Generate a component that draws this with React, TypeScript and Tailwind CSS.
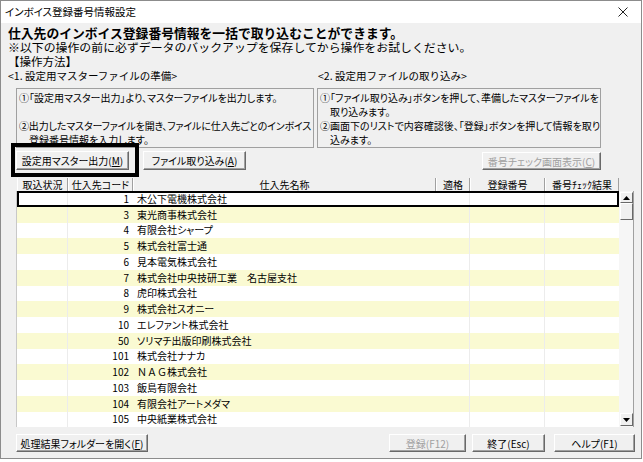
import React from 'react';

const rows: { code: number; name: React.ReactNode }[] = [
  { code: 1, name: '木公下電機株式会社' },
  { code: 3, name: '東光商事株式会社' },
  { code: 4, name: '有限会社シャープ' },
  { code: 5, name: '株式会社富士通' },
  { code: 6, name: '見本電気株式会社' },
  { code: 7, name: '株式会社中央技研工業　名古屋支社' },
  { code: 8, name: '虎印株式会社' },
  { code: 9, name: '株式会社スオニー' },
  { code: 10, name: 'エレファント株式会社' },
  { code: 50, name: 'ソリマチ出版印刷株式会社' },
  { code: 101, name: '株式会社ナナカ' },
  {
    code: 102,
    name: (
      <>
        <span className="[font-feature-settings:normal]">ＮＡＧ</span>株式会社
      </>
    ),
  },
  { code: 103, name: '飯島有限会社' },
  { code: 104, name: '有限会社アートメダマ' },
  { code: 105, name: '中央紙業株式会社' },
];

const WinButton: React.FC<{ className: string; disabled?: boolean; children: React.ReactNode }> = ({
  className,
  disabled,
  children,
}) => (
  <div
    className={`${className} flex items-center justify-center whitespace-nowrap bg-[#f0f0f0] border border-t-white border-l-white border-r-[#696969] border-b-[#696969] shadow-[inset_-1px_-1px_0_#a0a0a0] text-[10px] ${
      disabled ? 'text-[#a0a0a0]' : 'text-black'
    }`}
  >
    {children}
  </div>
);

const HeaderCell: React.FC<{ children?: React.ReactNode }> = ({ children }) => (
  <div className="flex items-center justify-center whitespace-nowrap border-l border-l-white border-r border-r-[#a0a0a0] text-[10px] leading-none">
    {children}
  </div>
);

const Triangle: React.FC<{ up?: boolean }> = ({ up }) => (
  <svg width="7" height="4" viewBox="0 0 7 4">
    {up ? <polygon points="0,4 7,4 3.5,0" fill="#000" /> : <polygon points="0,0 7,0 3.5,4" fill="#000" />}
  </svg>
);

export default function App() {
  return (
    <div className="relative w-[643px] h-[462px] bg-white overflow-hidden text-black font-['Noto_Sans_CJK_JP',sans-serif] [font-feature-settings:'palt']">
      <div className="w-[642px] h-[459px] border border-[#8c8c8c] flex flex-col">
        {/* title bar */}
        <div className="h-[22px] bg-white flex items-center justify-between pl-[4px] pr-[13px]">
          <span className="text-[10.5px]">インボイス登録番号情報設定</span>
          <svg width="10" height="10" viewBox="0 0 10 10">
            <path d="M0.5 0.5 L9.5 9.5 M9.5 0.5 L0.5 9.5" stroke="#222" strokeWidth="1" />
          </svg>
        </div>

        {/* body */}
        <div className="flex-1 bg-[#f0f0f0] flex flex-col pt-[3px]">
          <div className="pl-[7px] whitespace-nowrap [font-feature-settings:normal]">
            <div className="h-[14px] leading-[14px] text-[12.8px] font-bold">仕入先のインボイス登録番号情報を一括で取り込むことができます。</div>
            <div className="h-[14px] leading-[14px] text-[11.9px]">※以下の操作の前に必ずデータのバックアップを保存してから操作をお試しください。</div>
            <div className="h-[14px] leading-[14px] text-[11.5px]">【操作方法】</div>
            <div className="mt-[1px] h-[14px] leading-[14px] text-[10.5px] flex">
              <span className="w-[310px]">&lt;1. 設定用マスターファイルの準備&gt;</span>
              <span>&lt;2. 設定用ファイルの取り込み&gt;</span>
            </div>
          </div>

          {/* instruction boxes */}
          <div className="mt-[5px] flex pl-[15px] gap-[3px]">
            <div className="w-[298px] h-[60px] border border-[#a0a0a0] overflow-hidden pl-[2px] pt-[2px] leading-[14px] text-[10px] whitespace-nowrap">
              <div>①「設定用マスター出力」より、マスターファイルを出力します。</div>
              <div>&nbsp;</div>
              <div className="tracking-[-0.15px]">②出力したマスターファイルを開き、ファイルに仕入先ごとのインボイス</div>
              <div className="pl-[10px]">登録番号情報を入力します。</div>
            </div>
            <div className="w-[284px] h-[60px] border border-[#a0a0a0] overflow-hidden pl-[2px] pt-[2px] leading-[14px] text-[10px] whitespace-nowrap">
              <div>①「ファイル取り込み」ボタンを押して、準備したマスターファイルを</div>
              <div className="pl-[10px]">取り込みます。</div>
              <div>②画面下のリストで内容確認後、「登録」ボタンを押して情報を取り</div>
              <div className="pl-[10px]">込みます。</div>
            </div>
          </div>

          {/* buttons */}
          <div className="mt-[3px] flex items-start pl-[15px] pr-[40px]">
            <WinButton className="w-[113px] h-[19px]">
              設定用マスター出力(<span className="underline">M</span>)
            </WinButton>
            <WinButton className="ml-[14px] w-[103px] h-[19px]">
              ファイル取り込み(<span className="underline">A</span>)
            </WinButton>
            <div className="flex-1" />
            <WinButton className="mt-[1px] w-[119px] h-[18px]" disabled>
              番号チェック画面表示(<span className="underline">C</span>)
            </WinButton>
          </div>

          {/* grid */}
          <div className="mt-[8px] ml-[15px] w-[618px]">
            <div className="flex h-[13px] pl-[1px]">
              <div className="grid grid-cols-[51px_65px_303px_34px_75px_74px]">
                <HeaderCell>取込状況</HeaderCell>
                <HeaderCell>仕入先コード</HeaderCell>
                <HeaderCell>仕入先名称</HeaderCell>
                <HeaderCell>適格</HeaderCell>
                <HeaderCell>登録番号</HeaderCell>
                <HeaderCell>番号ﾁｪｯｸ結果</HeaderCell>
              </div>
            </div>
            <div className="flex h-[236px] border-l border-[#c8c8c8]">
              <div className="w-[602px] overflow-hidden">
                {rows.map((r, i) => (
                  <div
                    key={r.code}
                    className={`relative grid grid-cols-[51px_65px_303px_34px_75px_74px] h-[15.75px] items-center text-[10px] leading-none ${
                      i % 2 === 1 ? 'bg-[#fafad2]' : 'bg-white'
                    }`}
                  >
                    <div className="h-full border-r border-[#ececec]" />
                    <div className="text-right pr-[4px]">{r.code}</div>
                    <div className="pl-[4px] whitespace-nowrap">{r.name}</div>
                    <div className="h-full border-r border-[#ececec]" />
                    <div className="h-full border-r border-[#ececec]" />
                    <div className="h-full" />
                    {i === 0 && <div className="absolute inset-0 border-2 border-black pointer-events-none" />}
                  </div>
                ))}
              </div>
              {/* scrollbar */}
              <div className="w-[15px] bg-[#f6f6f6] border-r border-[#a0a0a0] flex flex-col py-[1px] pl-[1px]">
                <div className="h-[11px] flex items-center justify-center bg-[#f0f0f0] border border-t-white border-l-white border-r-[#696969] border-b-[#696969]">
                  <Triangle up />
                </div>
                <div className="h-[17px] bg-[#f0f0f0] border border-t-white border-l-white border-r-[#696969] border-b-[#696969]" />
                <div className="flex-1" />
                <div className="h-[13px] flex items-center justify-center bg-[#f0f0f0] border border-t-white border-l-white border-r-[#696969] border-b-[#696969]">
                  <Triangle />
                </div>
              </div>
            </div>
          </div>

          {/* bottom buttons */}
          <div className="mt-[7px] flex items-start pl-[15px] pr-[6px]">
            <WinButton className="w-[132px] h-[18px]">
              処理結果フォルダーを開く(<span className="underline">F</span>)
            </WinButton>
            <div className="flex-1" />
            <WinButton className="w-[77px] h-[18px]" disabled>
              登録(F12)
            </WinButton>
            <WinButton className="ml-[6px] w-[73px] h-[18px]">終了(Esc)</WinButton>
            <WinButton className="ml-[9px] w-[81px] h-[18px]">ヘルプ(F1)</WinButton>
          </div>
        </div>
      </div>

      {/* annotation frame */}
      <div className="absolute left-[11px] top-[143px] w-[128px] h-[34px] border-4 border-black pointer-events-none" />
    </div>
  );
}
